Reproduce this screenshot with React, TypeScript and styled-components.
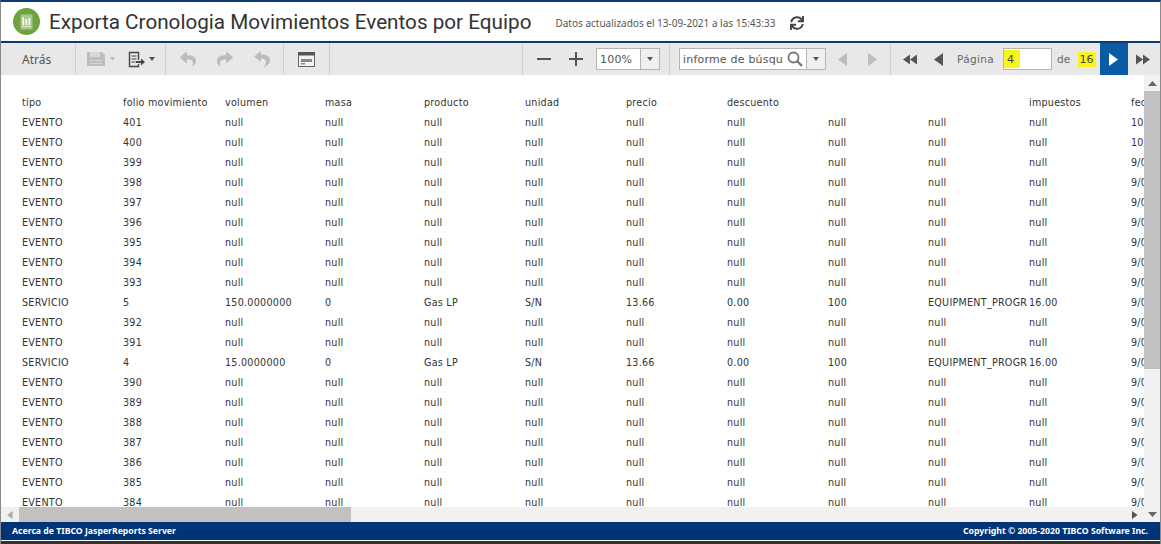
import React from "react";
import styled, { createGlobalStyle } from "styled-components";
import { FaReply, FaShare, FaSync } from "react-icons/fa";

const GlobalStyle = createGlobalStyle`
  html, body { margin: 0; padding: 0; background: #fff; overflow: hidden; }
  #root { width: 1161px; height: 544px; }
`;

const Page = styled.div`
  width: 1161px;
  height: 544px;
  display: flex;
  flex-direction: column;
  background: #fff;
  box-sizing: border-box;
  border-top: 2px solid #0e3a73;
  border-left: 1px solid #8a8a8a;
  border-right: 1px solid #8a8a8a;
  overflow: hidden;
`;

const Header = styled.header`
  height: 39px;
  flex: none;
  display: flex;
  align-items: center;
  padding-left: 12px;
  border-bottom: 2px solid #0e3a73;
`;

const Title = styled.h1`
  margin: 0 0 0 9px;
  font: 400 20.7px Roboto, sans-serif;
  color: #333;
  white-space: nowrap;
`;

const Updated = styled.span`
  margin-left: 24px;
  padding-top: 3px;
  font: 400 10px "Noto Sans", sans-serif;
  color: #555;
  white-space: nowrap;
`;

const RefreshWrap = styled.span`
  display: flex;
  margin-left: 15px;
  padding-top: 2px;
  color: #444;
`;

const Toolbar = styled.div`
  height: 32px;
  flex: none;
  display: flex;
  background: #e8e8e8;
  font-family: "DejaVu Sans", sans-serif;
`;

const Group = styled.div<{ $w?: number; $pad?: number; $gap?: number; $plain?: boolean }>`
  width: ${(p) => (p.$w ? `${p.$w}px` : "auto")};
  flex: ${(p) => (p.$w ? "none" : "1")};
  box-sizing: border-box;
  display: flex;
  align-items: center;
  gap: ${(p) => p.$gap ?? 0}px;
  padding-left: ${(p) => p.$pad ?? 0}px;
  border-right: ${(p) => (p.$plain ? "none" : "1px solid #cfcfcf")};
`;

const BackLabel = styled.span`
  font: 400 12px "Noto Sans", sans-serif;
  color: #555;
`;

const Field = styled.div<{ $w: number; $ml?: number }>`
  width: ${(p) => p.$w}px;
  height: 22px;
  margin-left: ${(p) => p.$ml ?? 0}px;
  flex: none;
  box-sizing: border-box;
  display: flex;
  align-items: center;
  background: #fff;
  border: 1px solid #b5b5b5;
  color: #333;
`;

const FieldText = styled.span`
  flex: 1;
  padding-left: 3px;
  white-space: nowrap;
  overflow: hidden;
  color: #555;
  font-size: 11px;
  letter-spacing: 0.2px;
`;

const Drop = styled.span`
  width: 18px;
  height: 100%;
  flex: none;
  display: flex;
  align-items: center;
  justify-content: center;
  background: #f0f0f0;
  border-left: 1px solid #b5b5b5;
`;

const PagerLabel = styled.span<{ $ml: number }>`
  margin-left: ${(p) => p.$ml}px;
  font-size: 10.5px;
  letter-spacing: 0.3px;
  color: #666;
  white-space: nowrap;
`;

const Marked = styled.span`
  background: #f6f51e;
  color: #444;
  font-size: 11px;
`;

const PageValue = styled(Marked)`
  align-self: stretch;
  margin: 1px 0;
  width: 16px;
  padding-left: 3px;
  box-sizing: border-box;
  display: flex;
  align-items: center;
`;

const PageTotal = styled(Marked)`
  margin-left: 7px;
  padding: 1px 2px;
`;

const NextButton = styled.span`
  width: 28px;
  height: 32px;
  margin-left: 4px;
  flex: none;
  display: flex;
  align-items: center;
  justify-content: center;
  background: #0a5ba6;
`;

const IconSlot = styled.span<{ $ml?: number }>`
  display: flex;
  flex: none;
  margin-left: ${(p) => p.$ml ?? 0}px;
`;

const HistoryGroup = styled(Group)`
  color: #bcbcbc;
`;

const Body = styled.div`
  flex: 1;
  min-height: 0;
  display: grid;
  grid-template-columns: 1fr 16px;
  grid-template-rows: 1fr 15px;
`;

const Viewport = styled.div`
  overflow: hidden;
  padding: 18px 0 0 21px;
`;

const Row = styled.div`
  display: grid;
  grid-template-columns: 101px 102px 100px 99px 101px 101px 101px 101px 100px 101px 102px 100px;
  height: 20px;
  align-items: center;
`;

const Cell = styled.span`
  font: 400 9.6px "DejaVu Sans", sans-serif;
  letter-spacing: 0.25px;
  color: #333;
  white-space: nowrap;
  overflow: hidden;
  line-height: 20px;
`;

const VTrack = styled.div`
  display: flex;
  flex-direction: column;
  align-items: center;
  background: #f1f1f1;
  grid-row: 1 / 3;
  grid-column: 2;
`;

const VThumb = styled.div`
  width: 100%;
  height: 278px;
  flex: none;
  background: #c1c1c1;
`;

const ArrowBox = styled.span<{ $grow?: boolean }>`
  flex: none;
  height: 16px;
  width: 16px;
  display: flex;
  align-items: center;
  justify-content: center;
  margin-top: ${(p) => (p.$grow ? "auto" : "0")};
`;

const HTrack = styled.div`
  display: flex;
  align-items: stretch;
  background: #f1f1f1;
  grid-row: 2;
  grid-column: 1;
`;

const HThumb = styled.div`
  width: 332px;
  flex: none;
  background: #c1c1c1;
`;

const HArrow = styled.span<{ $end?: boolean }>`
  width: 18px;
  flex: none;
  display: flex;
  align-items: center;
  justify-content: center;
  margin-left: ${(p) => (p.$end ? "auto" : "0")};
`;

const Footer = styled.footer`
  height: 18px;
  flex: none;
  display: flex;
  align-items: center;
  justify-content: space-between;
  padding: 0 12px 0 11px;
  background: #003478;
  color: #fff;
  font: 700 8.7px "Noto Sans", sans-serif;
`;

const BottomEdge = styled.div`
  height: 3px;
  flex: none;
  margin: 1px -1px 0;
  background: #333;
`;

const Logo = () => (
  <svg width="27" height="27" viewBox="0 0 27 27">
    <circle cx="13.5" cy="13.5" r="13.5" fill="#6ea33f" />
    <rect x="7.5" y="6.5" width="12" height="15" rx="1" fill="#a9c98b" />
    <rect x="9.5" y="9" width="1.6" height="8" fill="#fff" />
    <rect x="12.5" y="11" width="1.6" height="6" fill="#fff" />
    <rect x="15.5" y="10" width="1.6" height="7" fill="#fff" />
    <rect x="9" y="18" width="9" height="1" fill="#e3eed8" />
  </svg>
);

const Caret = ({ color = "#555", w = 6 }: { color?: string; w?: number }) => (
  <svg width={w} height={w / 2 + 1} viewBox="0 0 6 4">
    <path d="M0 0h6L3 4z" fill={color} />
  </svg>
);

const SaveIcon = () => (
  <svg width="18" height="16" viewBox="0 0 18 16">
    <path d="M0 1h15l3 3v11H0z" fill="#bdbdbd" />
    <rect x="3" y="1" width="10" height="5" fill="#d8d8d8" />
    <rect x="3" y="9" width="12" height="1" fill="#d8d8d8" />
    <rect x="3" y="12" width="12" height="1" fill="#d8d8d8" />
  </svg>
);

const ExportIcon = () => (
  <svg width="17" height="17" viewBox="0 0 17 17" fill="none" stroke="#444">
    <path d="M10.5 9V1.5h-9v14h9V13" strokeWidth="1.4" />
    <path d="M3.5 5h5M3.5 8h5M3.5 11h4" strokeWidth="1.2" />
    <path d="M8 10h5V7.5l4 3.5-4 3.5V12H8z" fill="#444" stroke="none" />
  </svg>
);

const Reset = () => (
  <svg width="17" height="16" viewBox="0 0 17 16">
    <path d="M7 0L0 5.5 7 11V7.5c3 0 5 1 5 3.5 0 2-1 3.5-2.5 5C14 14.5 16 12 16 9c0-4-4-5.5-9-5.5z" fill="#bcbcbc" />
  </svg>
);

const LayoutIcon = () => (
  <svg width="17" height="15" viewBox="0 0 17 15">
    <rect x="0.5" y="0.5" width="16" height="14" fill="#f2f2f2" stroke="#666" />
    <rect x="0" y="0" width="17" height="3.5" fill="#555" />
    <rect x="3" y="7" width="11" height="3" fill="#888" />
    <rect x="3" y="11" width="4" height="1.5" fill="#888" />
  </svg>
);

const Minus = () => (
  <svg width="14" height="14" viewBox="0 0 14 14">
    <rect x="0" y="6" width="14" height="2" fill="#555" />
  </svg>
);

const Plus = () => (
  <svg width="14" height="14" viewBox="0 0 14 14">
    <path d="M0 6h6V0h2v6h6v2H8v6H6V8H0z" fill="#555" />
  </svg>
);

const SearchIcon = () => (
  <svg width="16" height="16" viewBox="0 0 16 16" fill="none" stroke="#777">
    <circle cx="6.5" cy="6.5" r="5" strokeWidth="1.8" />
    <path d="M10 10l5 5" strokeWidth="2.4" />
  </svg>
);

const Tri = ({ dir, color, h = 13 }: { dir: "l" | "r"; color: string; h?: number }) => (
  <svg width={h * 0.7} height={h} viewBox="0 0 7 10">
    <path d={dir === "l" ? "M7 0v10L0 5z" : "M0 0v10l7-5z"} fill={color} />
  </svg>
);

const Double = ({ dir, color }: { dir: "l" | "r"; color: string }) => (
  <svg width="14" height="13" viewBox="0 0 14 10">
    <path d={dir === "l" ? "M7 0v10L0 5zM14 0v10L7 5z" : "M0 0v10l7-5zM7 0v10l7-5z"} fill={color} />
  </svg>
);

const UpDown = ({ up }: { up?: boolean }) => (
  <svg width="9" height="5" viewBox="0 0 9 5">
    <path d={up ? "M0 5h9L4.5 0z" : "M0 0h9L4.5 5z"} fill="#666" />
  </svg>
);

const HEAD = ["tipo", "folio movimiento", "volumen", "masa", "producto", "unidad", "precio", "descuento", "", "", "impuestos", "fecha"];

const FOLIOS: (number | string)[] = [401, 400, 399, 398, 397, 396, 395, 394, 393, "s5", 392, 391, "s4", 390, 389, 388, 387, 386, 385, 384];

const rowCells = (folio: number | string, i: number) => {
  const date = i < 2 ? "10/09/2021" : "9/09/2021";
  if (typeof folio === "string") {
    const volume = folio === "s5" ? "150.0000000" : "15.0000000";
    return ["SERVICIO", folio.slice(1), volume, "0", "Gas LP", "S/N", "13.66", "0.00", "100", "EQUIPMENT_PROGR", "16.00", date];
  }
  return ["EVENTO", String(folio), ...Array(9).fill("null"), date];
};

export default function App() {
  return (
    <>
      <GlobalStyle />
      <Page>
        <Header>
          <Logo />
          <Title>Exporta Cronologia Movimientos Eventos por Equipo</Title>
          <Updated>Datos actualizados el 13-09-2021 a las 15:43:33</Updated>
          <RefreshWrap>
            <FaSync size={14} />
          </RefreshWrap>
        </Header>
        <Toolbar>
          <Group $w={75} $pad={21}>
            <BackLabel>Atrás</BackLabel>
          </Group>
          <Group $w={90} $pad={11}>
            <SaveIcon />
            <IconSlot $ml={5}><Caret color="#bbb" w={5} /></IconSlot>
            <IconSlot $ml={13}><ExportIcon /></IconSlot>
            <IconSlot $ml={4}><Caret /></IconSlot>
          </Group>
          <HistoryGroup $w={118} $pad={14} $gap={21}>
            <FaReply size={16} />
            <FaShare size={16} />
            <Reset />
          </HistoryGroup>
          <Group $w={46} $pad={14}>
            <LayoutIcon />
          </Group>
          <Group />
          <Group $w={147} $pad={14} $gap={18}>
            <Minus />
            <Plus />
            <Field $w={64} $ml={-5}>
              <FieldText>100%</FieldText>
              <Drop><Caret /></Drop>
            </Field>
          </Group>
          <Group $w={221} $pad={9}>
            <Field $w={147}>
              <FieldText>informe de búsqu</FieldText>
              <IconSlot $ml={2}><SearchIcon /></IconSlot>
              <IconSlot $ml={3} />
              <Drop><Caret /></Drop>
            </Field>
            <IconSlot $ml={12}><Tri dir="l" color="#bcbcbc" /></IconSlot>
            <IconSlot $ml={21}><Tri dir="r" color="#bcbcbc" /></IconSlot>
          </Group>
          <Group $w={269} $pad={12} $plain>
            <Double dir="l" color="#555" />
            <IconSlot $ml={17}><Tri dir="l" color="#555" /></IconSlot>
            <PagerLabel $ml={14}>Página</PagerLabel>
            <Field $w={49} $ml={9}>
              <PageValue>4</PageValue>
            </Field>
            <PagerLabel $ml={5}>de</PagerLabel>
            <PageTotal>16</PageTotal>
            <NextButton><Tri dir="r" color="#fff" /></NextButton>
            <IconSlot $ml={8}><Double dir="r" color="#555" /></IconSlot>
          </Group>
        </Toolbar>
        <Body>
          <Viewport>
            <Row>
              {HEAD.map((h, i) => (
                <Cell key={i}>{h}</Cell>
              ))}
            </Row>
            {FOLIOS.map((f, i) => (
              <Row key={i}>
                {rowCells(f, i).map((c, j) => (
                  <Cell key={j}>{c}</Cell>
                ))}
              </Row>
            ))}
          </Viewport>
          <VTrack>
            <ArrowBox><UpDown up /></ArrowBox>
            <VThumb />
            <ArrowBox $grow><UpDown /></ArrowBox>
          </VTrack>
          <HTrack>
            <HArrow><Tri dir="l" color="#aaa" h={8} /></HArrow>
            <HThumb />
            <HArrow $end><Tri dir="r" color="#555" h={8} /></HArrow>
          </HTrack>
        </Body>
        <Footer>
          <span>Acerca de TIBCO JasperReports Server</span>
          <span>Copyright © 2005-2020 TIBCO Software Inc.</span>
        </Footer>
        <BottomEdge />
      </Page>
    </>
  );
}
